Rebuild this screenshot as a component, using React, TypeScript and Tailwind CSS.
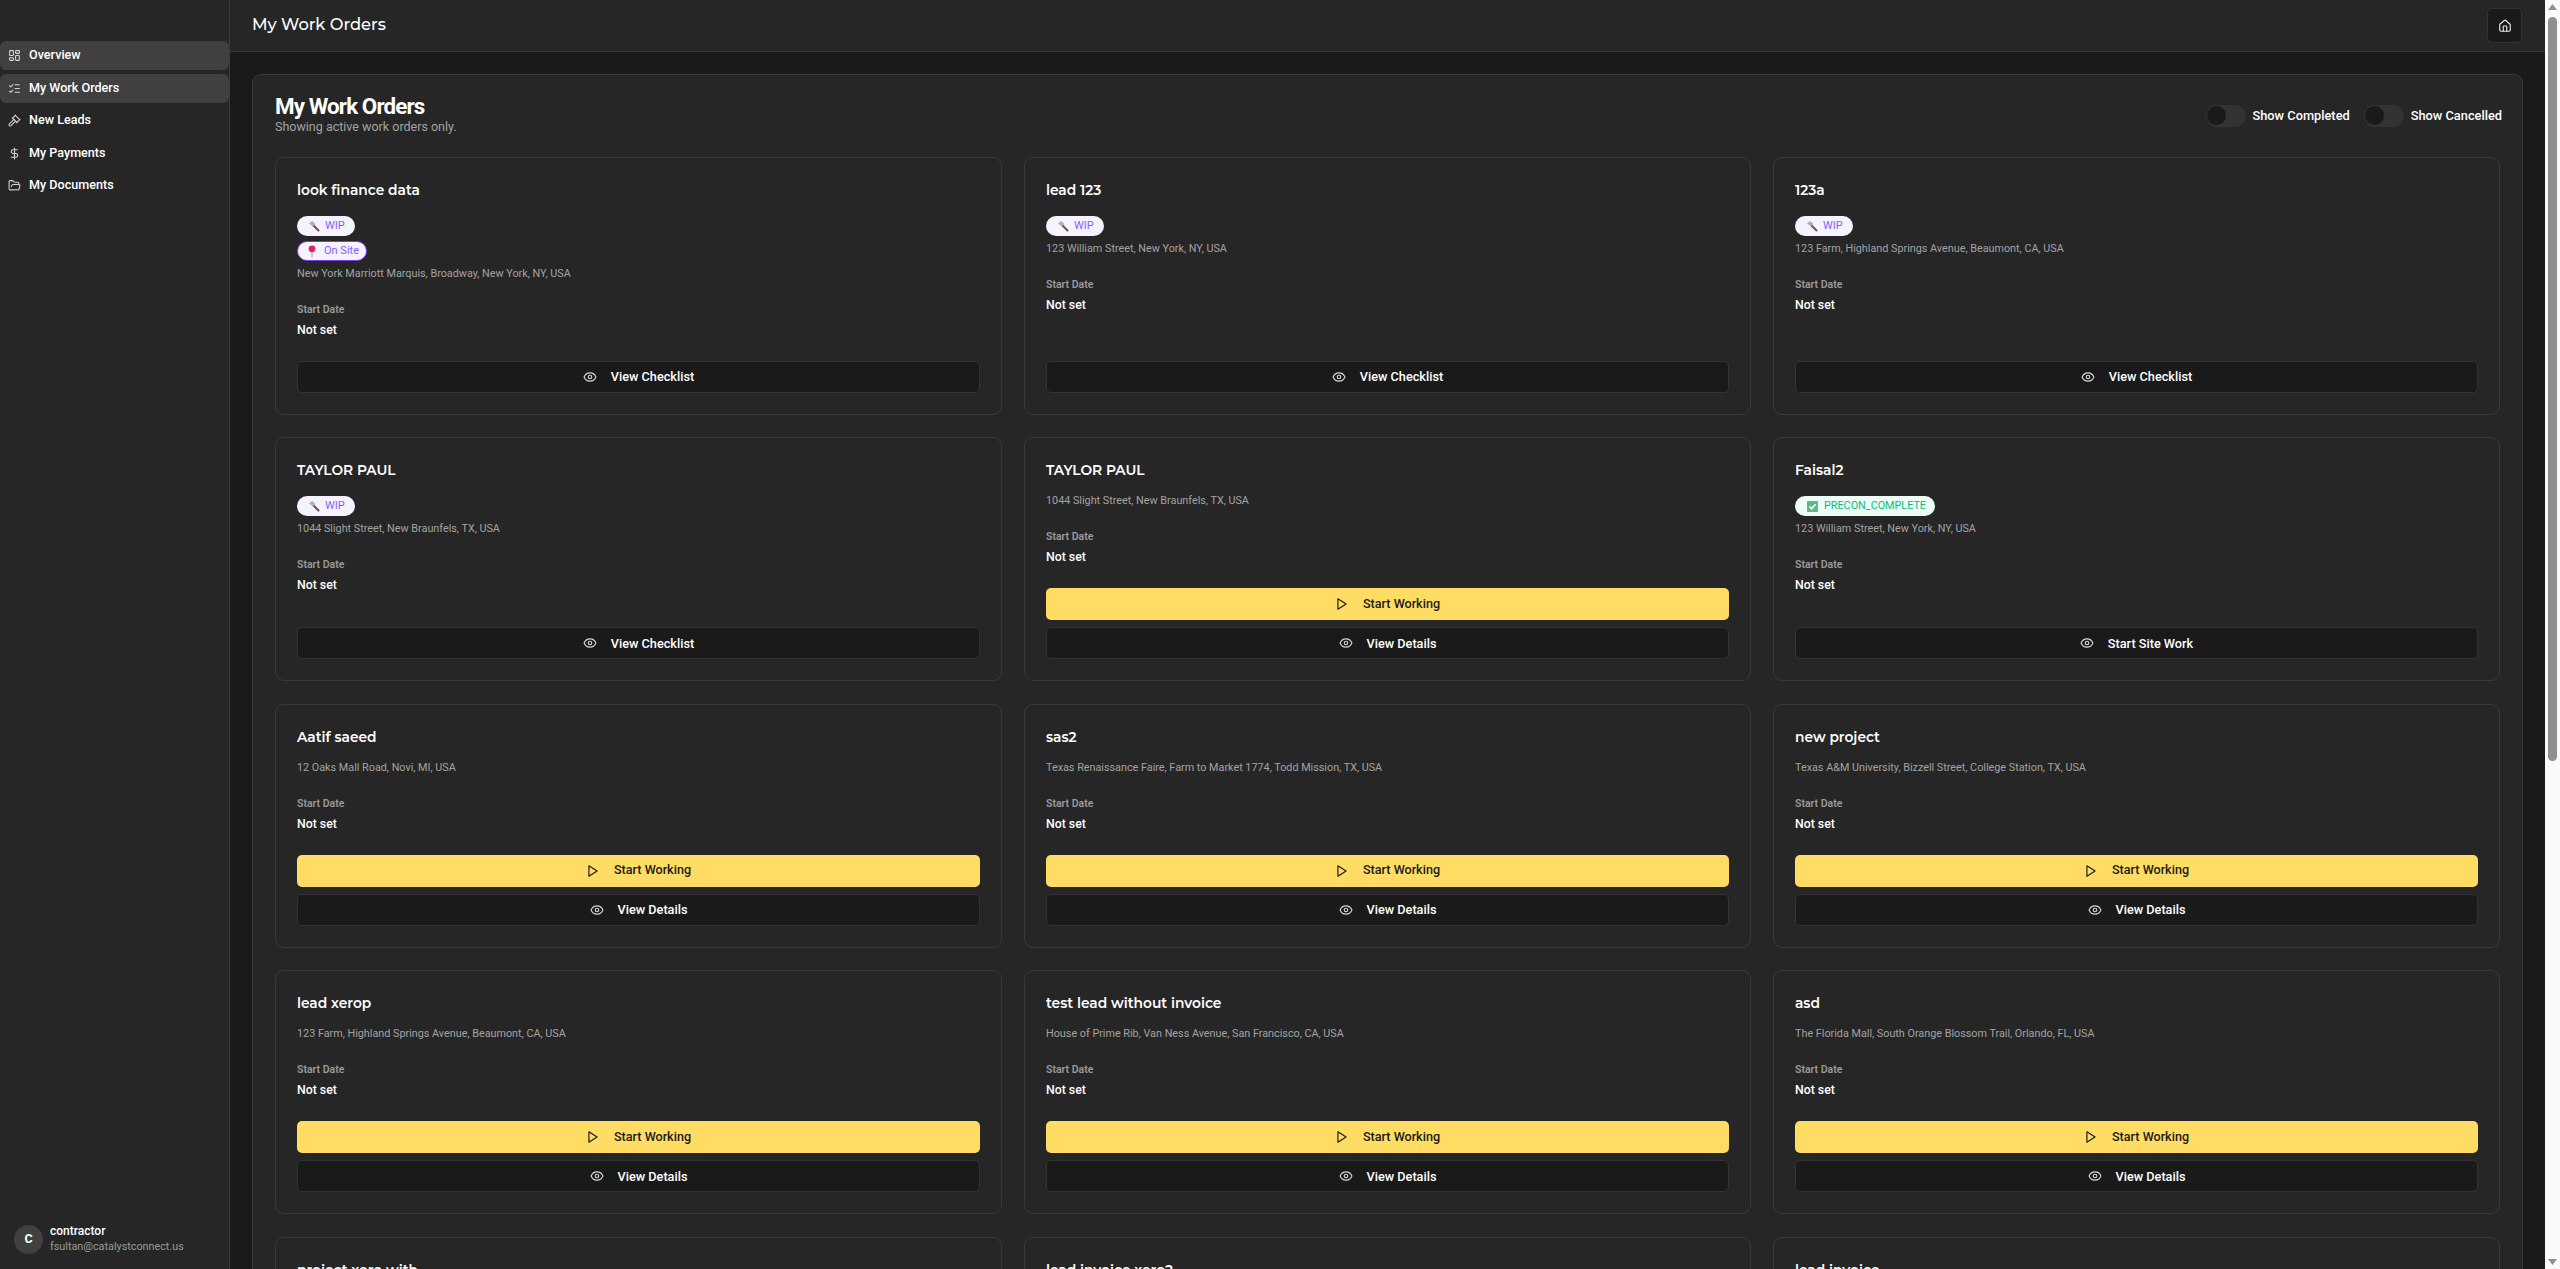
import { LayoutDashboard, ListChecks, Gavel, DollarSign, FolderOpen, House, Eye } from 'lucide-react';

const titleFont = "font-['Montserrat','Inter',sans-serif]";

const navItems = [
  { label: 'Overview', icon: LayoutDashboard, active: true },
  { label: 'My Work Orders', icon: ListChecks, active: true },
  { label: 'New Leads', icon: Gavel, active: false },
  { label: 'My Payments', icon: DollarSign, active: false },
  { label: 'My Documents', icon: FolderOpen, active: false },
];

type Order = {
  title: string;
  address?: string;
  badges?: ('wip' | 'site' | 'precon')[];
  action?: 'checklist' | 'start' | 'site';
};

const orders: Order[] = [
  { title: 'look finance data', address: 'New York Marriott Marquis, Broadway, New York, NY, USA', badges: ['wip', 'site'], action: 'checklist' },
  { title: 'lead 123', address: '123 William Street, New York, NY, USA', badges: ['wip'], action: 'checklist' },
  { title: '123a', address: '123 Farm, Highland Springs Avenue, Beaumont, CA, USA', badges: ['wip'], action: 'checklist' },
  { title: 'TAYLOR PAUL', address: '1044 Slight Street, New Braunfels, TX, USA', badges: ['wip'], action: 'checklist' },
  { title: 'TAYLOR PAUL', address: '1044 Slight Street, New Braunfels, TX, USA', action: 'start' },
  { title: 'Faisal2', address: '123 William Street, New York, NY, USA', badges: ['precon'], action: 'site' },
  { title: 'Aatif saeed', address: '12 Oaks Mall Road, Novi, MI, USA', action: 'start' },
  { title: 'sas2', address: 'Texas Renaissance Faire, Farm to Market 1774, Todd Mission, TX, USA', action: 'start' },
  { title: 'new project', address: 'Texas A&M University, Bizzell Street, College Station, TX, USA', action: 'start' },
  { title: 'lead xerop', address: '123 Farm, Highland Springs Avenue, Beaumont, CA, USA', action: 'start' },
  { title: 'test lead without invoice', address: 'House of Prime Rib, Van Ness Avenue, San Francisco, CA, USA', action: 'start' },
  { title: 'asd', address: 'The Florida Mall, South Orange Blossom Trail, Orlando, FL, USA', action: 'start' },
  // last row sits under the fold, only the titles show
  { title: 'project xero with' },
  { title: 'lead invoice xero2' },
  { title: 'lead invoice' },
];

function HammerEmoji() {
  return (
    <svg width="12" height="12" viewBox="0 0 12 12" className="shrink-0">
      <path d="M5.5 5.5 L10.5 10.5" stroke="#7a4a44" strokeWidth="2" strokeLinecap="round" />
      <path d="M1 3.5 L4 1 L7.5 4 L5 6.5 Z" fill="#a9b1b8" />
    </svg>
  );
}

function PinEmoji() {
  return (
    <svg width="12" height="13" viewBox="0 0 12 13" className="shrink-0">
      <path d="M6 6 L6 12.5" stroke="#a3a3a3" strokeWidth="1.2" />
      <circle cx="6" cy="3.8" r="3.4" fill="#e0245e" />
    </svg>
  );
}

function CheckEmoji() {
  return (
    <svg width="11" height="11" viewBox="0 0 11 11" className="shrink-0">
      <rect width="11" height="11" rx="1" fill="#5cb88a" />
      <path d="M2.5 5.5 L4.6 7.8 L8.6 3.2" stroke="#fff" strokeWidth="1.6" fill="none" />
    </svg>
  );
}

function PlayIcon() {
  return (
    <svg width="14" height="14" viewBox="0 0 24 24" fill="none" stroke="currentColor" strokeWidth="2" strokeLinejoin="round" className="shrink-0">
      <polygon points="5 3 19 12 5 21 5 3" />
    </svg>
  );
}

function Badges({ kinds }: { kinds: ('wip' | 'site' | 'precon')[] }) {
  return (
    <div className="flex flex-col items-start gap-[5px] pt-[4px] pb-[4px]">
      {kinds.map((kind) => {
        if (kind === 'wip') {
          return (
            <span key={kind} className="flex h-[20px] w-[58px] items-center gap-[5px] rounded-full bg-[#f5f3ff] pl-[11px] text-[11px] text-[#8b5cf6]">
              <HammerEmoji />
              WIP
            </span>
          );
        }
        if (kind === 'site') {
          return (
            <span key={kind} className="flex h-[20px] w-[70px] items-center gap-[6px] rounded-full border border-[#7c3aed] bg-[#f5f3ff] pl-[8px] text-[11px] text-[#8b5cf6]">
              <PinEmoji />
              On Site
            </span>
          );
        }
        return (
          <span key={kind} className="flex h-[20px] w-[140px] items-center gap-[6px] rounded-full bg-[#ecfdf5] pl-[12px] text-[10.8px] text-[#10b981]">
            <CheckEmoji />
            PRECON_COMPLETE
          </span>
        );
      })}
    </div>
  );
}

function OutlineButton({ label }: { label: string }) {
  return (
    <button className="flex h-[32px] w-full items-center justify-center gap-[14px] rounded-[5px] border border-[#333333] bg-[#1a1a1a] text-[12.7px] font-medium text-white">
      <Eye size={14} className="text-[#d4d4d4]" />
      {label}
    </button>
  );
}

function OrderCard({ order }: { order: Order }) {
  return (
    <div className="flex flex-col rounded-[9px] border border-[#3a3a3a] bg-[#262626] p-[21px]">
      <h3 className={`${titleFont} mb-[11px] text-[13.8px] leading-[22px] font-semibold text-white`}>{order.title}</h3>
      {order.badges && <Badges kinds={order.badges} />}
      {order.address && (
        <>
          <p className="pt-[1px] text-[10.8px] leading-[16px] text-[#a3a3a3]">{order.address}</p>
          <p className="mt-[20px] text-[10.5px] leading-[16px] font-semibold text-[#9a9a9a]">Start Date</p>
          <p className="mt-[4px] text-[12.3px] leading-[16px] font-medium text-white">Not set</p>
        </>
      )}
      <div className="mt-auto flex flex-col gap-[7px] pt-[23px]">
        {order.action === 'start' && (
          <>
            <button className="flex h-[32px] w-full items-center justify-center gap-[14px] rounded-[5px] bg-[#ffdc64] text-[12.6px] font-medium text-[#1a1a1a]">
              <PlayIcon />
              Start Working
            </button>
            <OutlineButton label="View Details" />
          </>
        )}
        {order.action === 'checklist' && <OutlineButton label="View Checklist" />}
        {order.action === 'site' && <OutlineButton label="Start Site Work" />}
      </div>
    </div>
  );
}

function Toggle({ label }: { label: string }) {
  return (
    <div className="flex items-center gap-[7px]">
      <span className="flex h-[22px] w-[40px] items-center rounded-full bg-[#333333] pl-[1px]">
        <span className="h-[19px] w-[19px] rounded-full bg-[#1a1a1a]" />
      </span>
      <span className="text-[12.8px] font-medium text-white">{label}</span>
    </div>
  );
}

export default function App() {
  return (
    <div className="flex h-screen overflow-hidden bg-[#1a1a1a] font-['Roboto',sans-serif] text-white">
      <aside className="flex w-[230px] shrink-0 flex-col border-r border-[#3a3a3a] bg-[#262626] pt-[41px]">
        <nav className="flex flex-col gap-[3.5px]">
          {navItems.map((item) => (
            <div
              key={item.label}
              className={`flex h-[29px] items-center gap-[8px] rounded-[6px] pl-[8px] text-[12.6px] font-medium text-white ${item.active ? 'bg-[#404040]' : ''}`}
            >
              <item.icon size={13} className="text-[#d4d4d4]" />
              {item.label}
            </div>
          ))}
        </nav>
        <div className="mt-auto flex items-center gap-[7px] pb-[15px] pl-[14px]">
          <span className="flex h-[29px] w-[29px] items-center justify-center rounded-full bg-[#404040] text-[12.5px] font-bold">C</span>
          <div>
            <p className="text-[12px] leading-[15px] font-medium">contractor</p>
            <p className="text-[10.8px] leading-[15px] text-[#9a9a9a]">fsultan@catalystconnect.us</p>
          </div>
        </div>
      </aside>
      <div className="min-w-0 flex-1 overflow-hidden">
        <header className="flex h-[52px] items-center justify-between border-b border-[#3a3a3a] bg-[#262626] pr-[23px] pl-[22px]">
          <h1 className={`${titleFont} pb-[2px] text-[16.3px] font-medium text-white`}>My Work Orders</h1>
          <button className="flex h-[35px] w-[35px] items-center justify-center rounded-[5px] border border-[#333333] bg-[#1a1a1a]">
            <House size={14} className="text-[#e5e5e5]" />
          </button>
        </header>
        <main className="p-[22px]">
          <div className="rounded-[9px] border border-[#3a3a3a] bg-[#262626] p-[22px]">
            <div className="mb-[23px] flex items-center justify-between">
              <div>
                <h2 className="text-[22.4px] leading-[18px] font-bold tracking-[-0.9px] text-white">My Work Orders</h2>
                <p className="mt-[5px] text-[12.5px] leading-[14px] text-[#a3a3a3]">Showing active work orders only.</p>
              </div>
              <div className="-mr-[2px] flex gap-[14px]">
                <Toggle label="Show Completed" />
                <Toggle label="Show Cancelled" />
              </div>
            </div>
            <div className="grid grid-cols-3 gap-x-[22px] gap-y-[22.4px]">
              {orders.map((order, i) => (
                <OrderCard key={i} order={order} />
              ))}
            </div>
          </div>
        </main>
      </div>
      {/* browser scrollbar, headless chrome does not paint one */}
      <div className="flex w-[15px] shrink-0 flex-col items-center justify-between bg-[#fafafa] pt-[4px] pb-[4px]">
        <svg width="9" height="6" viewBox="0 0 9 6" className="shrink-0">
          <polygon points="4.5 0 9 6 0 6" fill="#8f8f8f" />
        </svg>
        <div className="mt-[7px] mb-auto h-[744px] w-[9px] rounded-full bg-[#8f8f8f]" />
        <svg width="9" height="6" viewBox="0 0 9 6" className="shrink-0">
          <polygon points="0 0 9 0 4.5 6" fill="#8f8f8f" />
        </svg>
      </div>
    </div>
  );
}
